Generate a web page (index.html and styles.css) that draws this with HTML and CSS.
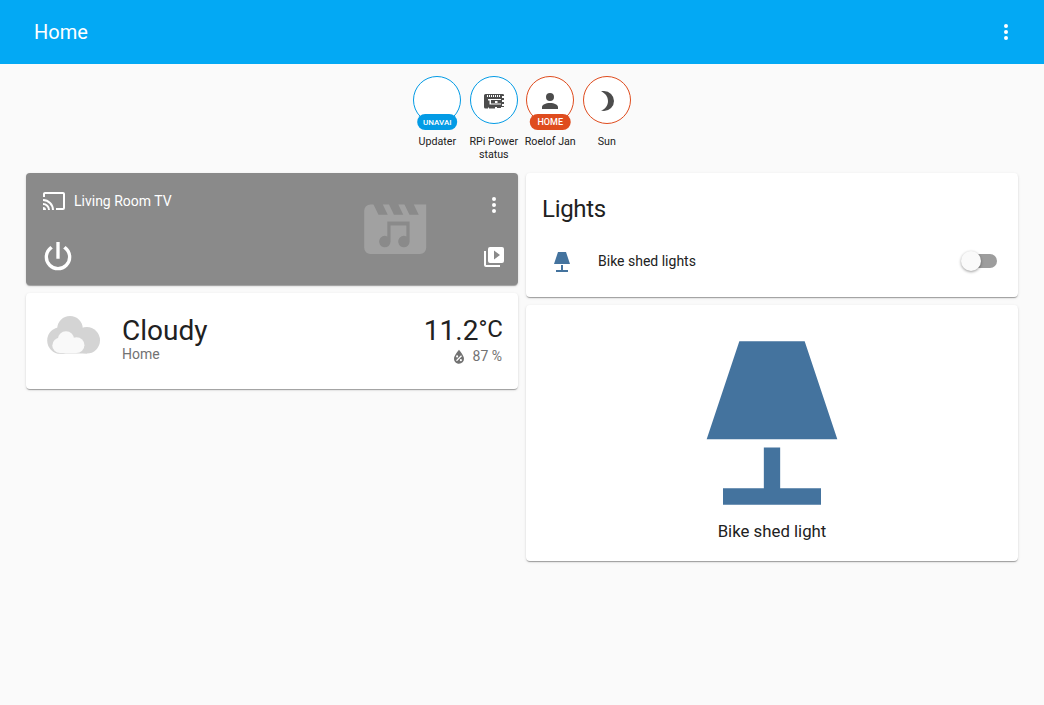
FILE: index.html
```html
<!DOCTYPE html>
<html lang="en">
<head>
<meta charset="utf-8">
<title>Home</title>
<link rel="stylesheet" href="styles.css">
</head>
<body>
<header class="toolbar">
  <h1 class="toolbar-title">Home</h1>
  <svg class="icon" viewBox="0 0 24 24"><path d="M12,16A2,2 0 0,1 14,18A2,2 0 0,1 12,20A2,2 0 0,1 10,18A2,2 0 0,1 12,16M12,10A2,2 0 0,1 14,12A2,2 0 0,1 12,14A2,2 0 0,1 10,12A2,2 0 0,1 12,10M12,4A2,2 0 0,1 14,6A2,2 0 0,1 12,8A2,2 0 0,1 10,6A2,2 0 0,1 12,4Z"/></svg>
</header>
<main>
  <section class="badges">
    <div class="badge blue"><div class="circle"><span class="pill small">UNAVAI</span></div><div class="name">Updater</div></div>
    <div class="badge blue"><div class="circle"><svg class="icon" viewBox="0 0 24 24"><path fill-rule="evenodd" d="M3.500 5H20.500Q22 5 22 6V7H20V9H22V11H20V13H22V15H20V17H22V18H19V19H15V18H13V19.500H7V18.500H6V19.500H3.500Q2 19.500 2 18V6.500Q2 5 3.500 5ZM5 6V8H6V6ZM7 6V8H8V6ZM9 6V8H10V6ZM11 6V8H12V6ZM13 6V8H14V6ZM15 6V8H16V6ZM17 6V8H18V6ZM6 10V11.500H7.500V15.500H19V14.500H9V11H19V10ZM13 12V14H15.500V12Z"/></svg></div><div class="name">RPi Power status</div></div>
    <div class="badge red"><div class="circle"><svg class="icon" viewBox="0 0 24 24"><path d="M12,4A4,4 0 0,1 16,8A4,4 0 0,1 12,12A4,4 0 0,1 8,8A4,4 0 0,1 12,4M12,14C16.42,14 20,15.79 20,18V20H4V18C4,15.79 7.58,14 12,14Z"/></svg><span class="pill">HOME</span></div><div class="name">Roelof Jan</div></div>
    <div class="badge red"><div class="circle"><svg class="icon" viewBox="0 0 24 24"><path d="M9 2C7.95 2 6.95 2.160 6 2.460C10.060 3.730 13 7.500 13 12S10.060 20.270 6 21.540C6.950 21.840 7.950 22 9 22A10 10 0 0 0 9 2Z"/></svg></div><div class="name">Sun</div></div>
  </section>
  <section class="columns">
    <div class="column">
      <article class="card media">
        <svg class="artwork" viewBox="0 0 24 24"><path fill-rule="evenodd" d="M4 4H5L6.600 7.300H9.600L8 4H10L11.600 7.300H14.600L13 4H15L16.600 7.300H19.600L18 4H22V18A2 2 0 0 1 20 20H4A2 2 0 0 1 2 18V6A2 2 0 0 1 4 4ZM9.450 9.500V14.340A1.850 1.850 0 1 0 10.500 16V10.800H15.600V14.340A1.850 1.850 0 1 0 16.650 16V9.500Z"/></svg>
        <div class="media-left">
          <div class="media-title"><svg class="icon" viewBox="0 0 24 24"><path d="M1,10V12A9,9 0 0,1 10,21H12C12,14.92 7.070,10 1,10M1,14V16A5,5 0 0,1 6,21H8A7,7 0 0,0 1,14M1,18V21H4A3,3 0 0,0 1,18M21,3H3C1.890,3 1,3.890 1,5V8H3V5H21V19H14V21H21A2,2 0 0,0 23,19V5C23,3.890 22.100,3 21,3Z"/></svg><span>Living Room TV</span></div>
          <svg class="power" viewBox="0 0 24 24"><path d="M16.560,5.440L15.110,6.890C16.840,7.940 18,9.830 18,12A6,6 0 0,1 12,18A6,6 0 0,1 6,12C6,9.830 7.160,7.940 8.880,6.880L7.440,5.440C5.360,6.880 4,9.280 4,12A8,8 0 0,0 12,20A8,8 0 0,0 20,12C20,9.280 18.640,6.880 16.560,5.440M13,3H11V13H13"/></svg>
        </div>
        <div class="media-right">
          <svg class="icon" viewBox="0 0 24 24"><path d="M12,16A2,2 0 0,1 14,18A2,2 0 0,1 12,20A2,2 0 0,1 10,18A2,2 0 0,1 12,16M12,10A2,2 0 0,1 14,12A2,2 0 0,1 12,14A2,2 0 0,1 10,12A2,2 0 0,1 12,10M12,4A2,2 0 0,1 14,6A2,2 0 0,1 12,8A2,2 0 0,1 10,6A2,2 0 0,1 12,4Z"/></svg>
          <svg class="icon" viewBox="0 0 24 24"><path d="M4,6H2V20A2,2 0 0,0 4,22H18V20H4V6M20,2A2,2 0 0,1 22,4V16A2,2 0 0,1 20,18H8A2,2 0 0,1 6,16V4A2,2 0 0,1 8,2H20M12,14.500L18,10L12,5.500V14.500Z"/></svg>
        </div>
      </article>
      <article class="card weather">
        <svg class="cloud" viewBox="0 0 64 64"><g fill="#d4d4d4"><circle cx="14.500" cy="34.500" r="13.300"/><circle cx="24" cy="22.800" r="12.800"/><circle cx="40.800" cy="34.300" r="13.200"/><path d="M14 24H41V47.500H14Z"/></g><g fill="#f9f9f9"><circle cx="14" cy="39.400" r="7.700"/><circle cx="20" cy="33.500" r="8.300"/><circle cx="30.500" cy="39.200" r="7.900"/><path d="M14 36H30V47.100H14Z"/></g></svg>
        <div class="condition"><div class="state">Cloudy</div><div class="sub">Home</div></div>
        <div class="reading"><div class="temp">11.2<span>°C</span></div><div class="sub humidity"><svg viewBox="0 0 24 24"><path d="M12,3.250C12,3.250 6,10 6,14C6,17.320 8.690,20 12,20A6,6 0 0,0 18,14C18,10 12,3.250 12,3.250M14.470,9.970L15.530,11.030L9.530,17.030L8.470,15.970M9.750,10A1.250,1.250 0 0,1 11,11.250A1.250,1.250 0 0,1 9.750,12.500A1.250,1.250 0 0,1 8.500,11.250A1.250,1.250 0 0,1 9.750,10M14.250,14.500A1.250,1.250 0 0,1 15.500,15.750A1.250,1.250 0 0,1 14.250,17A1.250,1.250 0 0,1 13,15.750A1.250,1.250 0 0,1 14.250,14.500Z"/></svg>87 %</div></div>
      </article>
    </div>
    <div class="column">
      <article class="card lights">
        <h2>Lights</h2>
        <div class="row"><svg class="icon lamp" viewBox="0 0 24 24"><path d="M8,2H16L20,14H4L8,2M11,15H13V20H18V22H6V20H11V15Z"/></svg><span>Bike shed lights</span><div class="switch"><i></i></div></div>
      </article>
      <article class="card button-card">
        <svg class="lamp" viewBox="0 0 24 24"><path d="M8,2H16L20,14H4L8,2M11,15H13V20H18V22H6V20H11V15Z"/></svg>
        <div>Bike shed light</div>
      </article>
    </div>
  </section>
</main>
</body>
</html>
```
FILE: styles.css
```css
* { box-sizing: border-box; }
body { margin: 0; background: #fafafa; color: #212121; font: 14px/20px Roboto, sans-serif; }
svg { display: block; fill: currentColor; flex: none; }
h1, h2 { margin: 0; font-weight: 400; }
.icon { width: 24px; height: 24px; }
.toolbar { height: 64px; padding: 0 26px 0 34px; display: flex; align-items: center; justify-content: space-between; background: #03a9f4; color: #fff; }
.toolbar-title { font-size: 20px; line-height: 24px; }
.badges { height: 105px; padding-top: 12px; display: flex; justify-content: center; gap: 6.500px; }
.badge { width: 50px; font-size: 10.700px; line-height: 13px; text-align: center; }
.circle { position: relative; width: 48px; height: 48px; margin: 0 auto; border: 1px solid; border-radius: 50%; background: #fff; display: flex; align-items: center; justify-content: center; }
.blue .circle { border-color: #039be5; }
.red .circle { border-color: #df4c1e; }
.circle .icon { color: #4c4c4c; margin-top: 2px; }
.pill { position: absolute; bottom: -7px; left: 50%; transform: translateX(-50%); height: 16px; padding: 0 7.500px; border-radius: 8px; font-size: 9px; line-height: 16px; font-weight: 500; color: #fff; background: #df4c1e; }
.pill.small { background: #039be5; font-size: 8px; padding: 0 5.600px; line-height: 17px; }
.name { margin: 11px -2px 0; }
.badge:nth-child(3) .name { white-space: nowrap; }
.columns { display: flex; gap: 8px; padding: 4px 26px; }
.column { flex: 1; display: flex; flex-direction: column; gap: 8px; }
.card { background: #fff; border-radius: 4px; box-shadow: 0 2px 1px -1px rgba(0,0,0,.2), 0 1px 1px 0 rgba(0,0,0,.14), 0 1px 3px 0 rgba(0,0,0,.12); }
.media { position: relative; height: 112px; padding: 16px 12px 12px 16px; display: flex; justify-content: space-between; background: #8a8a8a; color: #fff; }
.artwork { position: absolute; left: 332px; top: 18.600px; width: 74.400px; height: 74.400px; color: #a1a1a1; }
.media-left, .media-right { display: flex; flex-direction: column; }
.media-title { display: flex; align-items: center; gap: 8px; height: 24px; }
.power { width: 40px; height: 40px; margin: 24px 0 0 -4px; }
.media-right { padding-top: 4px; gap: 28px; }
.weather { height: 96px; padding: 0 16px; display: flex; }
.cloud { width: 64px; height: 64px; margin-top: 13px; margin-left: 4px; }
.condition { margin: 21px auto 0 12px; }
.state, .temp { font-size: 28px; line-height: 34px; }
.sub { color: #727272; line-height: 16px; margin-top: -2px; }
.reading { margin-top: 21px; text-align: right; }
.temp { display: flex; justify-content: flex-end; margin-right: -1px; }
.temp span { font-size: 24px; line-height: 31px; }
.humidity { display: flex; align-items: center; justify-content: flex-end; gap: 4px; height: 16px; margin-top: 0; line-height: 14px; }
.humidity svg { width: 20px; height: 20px; margin-top: 2px; }
.lights { height: 124px; padding: 20px 16px; }
.lights h2 { font-size: 24px; line-height: 32px; letter-spacing: -.012em; }
.row { display: flex; align-items: center; height: 40px; margin-top: 16px; padding: 0 5px 0 8px; }
.row .icon { margin-top: 2px; }
.row span { margin-left: 24px; }
.lamp { color: #44739e; }
.switch { position: relative; width: 34px; height: 14px; margin-left: auto; border-radius: 7px; background: #9d9d9d; }
.switch i { position: absolute; left: -2px; top: -3px; width: 20px; height: 20px; border-radius: 50%; background: #fafafa; box-shadow: 0 1px 3px rgba(0,0,0,.4); }
.button-card { height: 256px; padding-top: 20px; display: flex; flex-direction: column; align-items: center; font-size: 16.800px; line-height: 20px; }
.button-card .lamp { width: 196px; height: 196px; }
```
